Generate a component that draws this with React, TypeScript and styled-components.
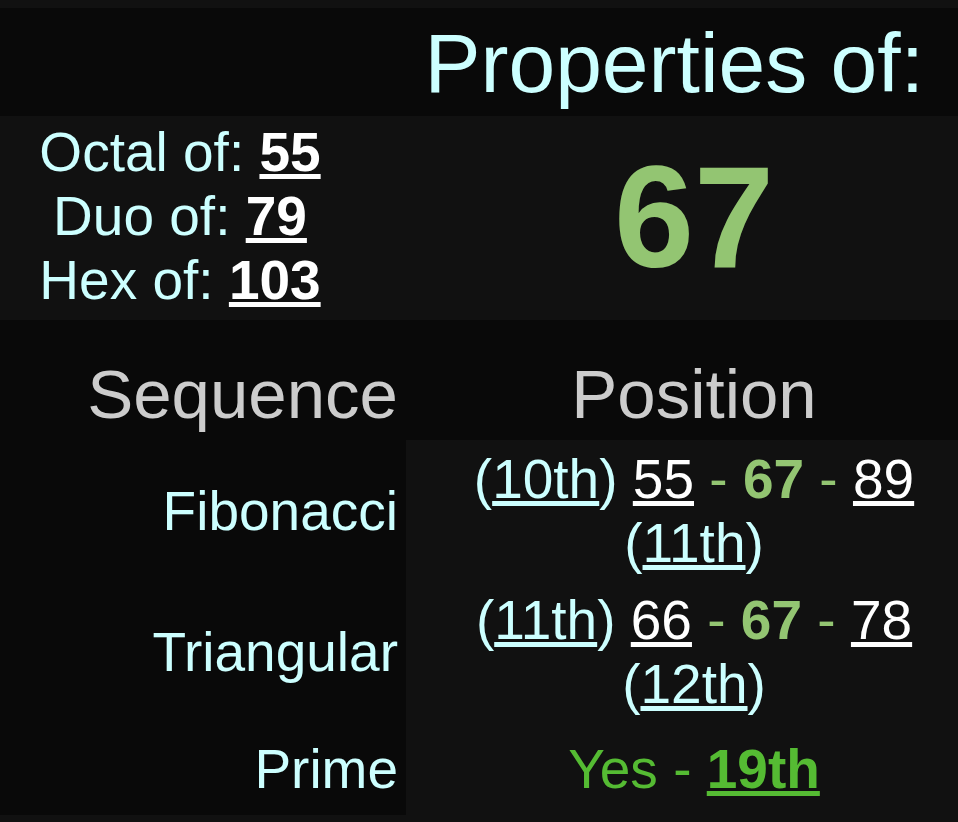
import React from "react";
import styled, { createGlobalStyle } from "styled-components";

const Global = createGlobalStyle`
  html, body { margin: 0; padding: 0; background: #111; }
  body { font-family: "Liberation Sans", Arial, Helvetica, sans-serif; }
`;

const CYAN = "#ccffff";
const GREEN = "#93c572";
const BRIGHT = "#55bb33";
const DARK = "#090909";
const MID = "#111111";

const Page = styled.div`
  width: 958px;
  padding: 8px 0 7px;
  background: ${MID};
  overflow: hidden;
`;

const Table = styled.div`
  display: grid;
  grid-template-columns: 406px 552px;
`;

const TitleBar = styled.div`
  grid-column: 1 / -1;
  height: 108px;
  background: ${DARK};
  display: flex;
  align-items: center;
  justify-content: flex-end;
  padding-right: 34px;
  padding-top: 2px;
  box-sizing: border-box;
`;

const Title = styled.h1`
  margin: 0;
  font-size: 84px;
  font-weight: normal;
  color: ${CYAN};
  line-height: normal;
`;

const BasesCell = styled.div`
  height: 204px;
  background: ${MID};
  display: flex;
  flex-direction: column;
  justify-content: center;
  align-items: center;
  padding-right: 46px;
  padding-bottom: 4px;
  box-sizing: border-box;
  font-size: 55px;
  color: ${CYAN};
  line-height: normal;
`;

const BaseLine = styled.div`
  white-space: nowrap;
`;

const BoldLink = styled.span<{ $color?: string }>`
  font-weight: bold;
  color: ${(p) => p.$color || "#fff"};
  text-decoration: underline;
`;

const Link = styled.span<{ $color?: string }>`
  color: ${(p) => p.$color || "#fff"};
  text-decoration: underline;
`;

const NumberCell = styled.div`
  height: 204px;
  background: ${MID};
  display: flex;
  align-items: center;
  justify-content: center;
  padding-left: 24px;
  box-sizing: border-box;
`;

const BigNumber = styled.span`
  font-size: 144px;
  font-weight: bold;
  color: ${GREEN};
  line-height: normal;
`;

const HeadCell = styled.div<{ $side: "left" | "right" }>`
  height: 120px;
  background: ${DARK};
  display: flex;
  align-items: flex-end;
  justify-content: ${(p) => (p.$side === "left" ? "flex-end" : "center")};
  padding: ${(p) => (p.$side === "left" ? "0 8px 6px 0" : "0 0 6px 24px")};
  box-sizing: border-box;
  font-size: 69px;
  color: #cccccc;
  line-height: normal;
`;

const LabelCell = styled.div<{ $h: number }>`
  height: ${(p) => p.$h}px;
  background: ${DARK};
  display: flex;
  align-items: center;
  justify-content: flex-end;
  padding-right: 8px;
  box-sizing: border-box;
  font-size: 55px;
  color: ${CYAN};
  line-height: normal;
`;

const ValueCell = styled.div<{ $h: number }>`
  height: ${(p) => p.$h}px;
  background: ${MID};
  display: flex;
  align-items: center;
  justify-content: center;
  padding-left: 24px;
  box-sizing: border-box;
  font-size: 55px;
  line-height: normal;
  text-align: center;
`;

const ValueText = styled.div`
  color: ${CYAN};
`;

const Dash = styled.span<{ $color?: string }>`
  color: ${(p) => p.$color || GREEN};
`;

const Current = styled.span`
  color: ${GREEN};
  font-weight: bold;
`;

const PrimeText = styled.div`
  color: ${BRIGHT};
`;

type Seq = {
  name: string;
  prevPos: string;
  prev: number;
  next: number;
  nextPos: string;
};

const seqs: Seq[] = [
  { name: "Fibonacci", prevPos: "10th", prev: 55, next: 89, nextPos: "11th" },
  { name: "Triangular", prevPos: "11th", prev: 66, next: 78, nextPos: "12th" },
];

export default function App() {
  return (
    <Page>
      <Global />
      <Table>
        <TitleBar>
          <Title>Properties of:</Title>
        </TitleBar>

        <BasesCell>
          <BaseLine>
            Octal of: <BoldLink>55</BoldLink>
          </BaseLine>
          <BaseLine>
            Duo of: <BoldLink>79</BoldLink>
          </BaseLine>
          <BaseLine>
            Hex of: <BoldLink>103</BoldLink>
          </BaseLine>
        </BasesCell>
        <NumberCell>
          <BigNumber>67</BigNumber>
        </NumberCell>

        <HeadCell $side="left">Sequence</HeadCell>
        <HeadCell $side="right">Position</HeadCell>

        {seqs.map((s) => (
          <React.Fragment key={s.name}>
            <LabelCell $h={141}>{s.name}</LabelCell>
            <ValueCell $h={141}>
              <ValueText>
                (<Link $color={CYAN}>{s.prevPos}</Link>) <Link>{s.prev}</Link>{" "}
                <Dash>-</Dash> <Current>67</Current> <Dash>-</Dash>{" "}
                <Link>{s.next}</Link> (<Link $color={CYAN}>{s.nextPos}</Link>)
              </ValueText>
            </ValueCell>
          </React.Fragment>
        ))}

        <LabelCell $h={93}>Prime</LabelCell>
        <ValueCell $h={93}>
          <PrimeText>
            Yes - <BoldLink $color={BRIGHT}>19th</BoldLink>
          </PrimeText>
        </ValueCell>
      </Table>
    </Page>
  );
}
